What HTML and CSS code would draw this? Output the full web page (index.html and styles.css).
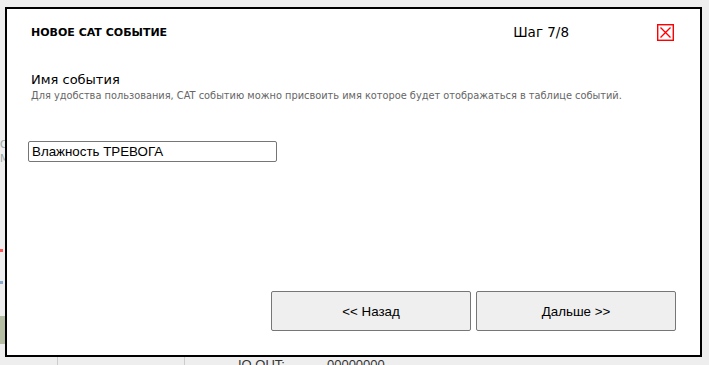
FILE: index.html
```html
<!DOCTYPE html>
<html lang="ru">
<head>
    <meta charset="UTF-8">
    <title>Новое CAT событие</title>
    <link rel="stylesheet" href="styles.css">
</head>
<body>
    <!-- page behind the modal -->
    <div class="page">
        <div class="side-mark mark-1">C</div>
        <div class="side-mark mark-2">M</div>
        <div class="side-dot dot-red"></div>
        <div class="side-dot dot-blue"></div>
        <div class="side-bar"></div>
        <div class="bottom-row">
            <div class="cell cell-a"></div>
            <div class="cell cell-b"></div>
            <div class="cell cell-c"><span class="io-label">IO OUT:</span><span>00000000</span></div>
        </div>
    </div>

    <div class="modal">
        <div class="modal-head">
            <div class="modal-title">НОВОЕ CAT СОБЫТИЕ</div>
            <div class="modal-step">Шаг 7/8</div>
            <span class="close-btn">
                <svg width="17" height="17" viewBox="0 0 17 17">
                    <rect x="0.7" y="0.7" width="15.6" height="15.6" fill="none" stroke="#f00" stroke-width="1.4"/>
                    <path d="M3.5 3.5 L13.5 13.5 M13.5 3.5 L3.5 13.5" stroke="#f00" stroke-width="1.4"/>
                </svg>
            </span>
        </div>

        <div class="field-label">Имя события</div>
        <div class="field-hint">Для удобства пользования, CAT событию можно присвоить имя которое будет отображаться в таблице событий.</div>

        <input type="text" class="name-input" value="Влажность ТРЕВОГА">

        <div class="modal-buttons">
            <button class="nav-btn">&lt;&lt; Назад</button>
            <button class="nav-btn">Дальше &gt;&gt;</button>
        </div>
    </div>
</body>
</html>
```

FILE: styles.css
```css
html, body { margin: 0; height: 100%; }
body { background: #eeeeee; font-family: Tahoma, "DejaVu Sans", sans-serif; overflow: hidden; }

/* background page, mostly hidden behind the modal */
.page { position: relative; height: 100%; }
.side-mark { position: absolute; left: 0; font-size: 10px; line-height: 10px; color: #9aa; }
.mark-1 { top: 140px; }
.mark-2 { top: 154px; }
.side-dot { position: absolute; left: 0; width: 3px; height: 3px; }
.dot-red { top: 249px; background: #f55; }
.dot-blue { top: 281px; background: #8ac; }
.side-bar { position: absolute; left: 0; top: 316px; width: 6px; height: 28px; background: #b5bea3; }
.bottom-row { position: absolute; left: 0; top: 356px; width: 100%; height: 20px; display: flex; font-family: "Liberation Sans", Arial, sans-serif; font-size: 13px; color: #333; }
.cell { border-left: 1px solid #ccc; }
.cell-a { width: 57px; border-left: none; }
.cell-b { width: 126px; }
.cell-c { flex: 1; padding-left: 53px; line-height: 18px; }
.io-label { margin-right: 42px; }

/* Modal */
.modal {
    position: absolute;
    left: 5px;
    top: 7px;
    width: 643px;
    height: 346px;
    background: #fff;
    border: 2px solid #000;
    display: flex;
    flex-direction: column;
    padding: 0 26px 0 24px;
}

.modal-head { display: flex; align-items: center; height: 46px; }
.modal-title { font-weight: bold; font-size: 11px; color: #000; flex: 1; }
.modal-step { font-size: 13.5px; color: #000; margin-right: 88px; }
.close-btn { display: block; width: 17px; height: 17px; }
.close-btn svg { display: block; }

.field-label { margin-top: 17px; font-size: 13px; color: #000; }
.field-hint { margin-top: 3px; font-size: 9.8px; color: #666; }

.name-input {
    margin: 40px 0 0 -3px;
    width: 249px;
    height: 21px;
    box-sizing: border-box;
    border: 1px solid #767676;
    border-radius: 2px;
    padding: 1px 3px;
    font-family: "Liberation Sans", Arial, sans-serif;
    font-size: 13.33px;
    color: #000;
}

.modal-buttons { margin: auto -2px 24px 0; display: flex; justify-content: flex-end; gap: 5px; }
.nav-btn {
    width: 200px;
    height: 40px;
    background: #efefef;
    border: 1px solid #767676;
    border-radius: 2px;
    font-family: "Liberation Sans", Arial, sans-serif;
    font-size: 13.33px;
    color: #000;
}
```
